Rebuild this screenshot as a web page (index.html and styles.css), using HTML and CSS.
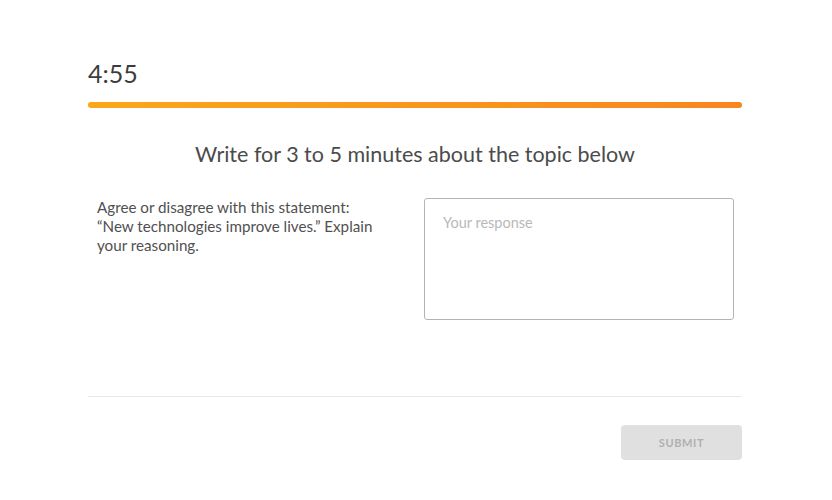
FILE: index.html
```html
<!DOCTYPE html>
<html lang="en">
  <head>
    <meta charset="UTF-8" />
    <meta name="viewport" content="width=device-width, initial-scale=1.0" />
    <title>Writing Prompt</title>
    <link rel="stylesheet" href="styles.css">
  </head>

  <body>
    <div class="page">
      <div class="timer">4:55</div>
      <div class="progress"><div class="progress-fill"></div></div>

      <h1 class="title">Write for 3 to 5 minutes about the topic below</h1>

      <div class="task">
        <p class="prompt">
          Agree or disagree with this statement: “New technologies improve lives.” Explain your reasoning.
        </p>
        <textarea class="response" placeholder="Your response"></textarea>
      </div>

      <div class="footer">
        <button class="submit" disabled>SUBMIT</button>
      </div>
    </div>
  </body>
</html>
```

FILE: styles.css
```css
* {
  margin: 0;
  padding: 0;
  box-sizing: border-box;
}

body {
  font-family: Lato, "Open Sans", sans-serif;
  background-color: #fff;
  color: #4b4b4b;
}

.page {
  width: 654px;
  margin-left: 88px;
  padding-top: 58px;
}

.timer {
  font-size: 25px;
  line-height: 30px;
  color: #3c3c3c;
}

.progress {
  margin-top: 14px;
  height: 6px;
  border-radius: 3px;
  background-color: #eee;
}

.progress-fill {
  height: 100%;
  border-radius: 3px;
  background: linear-gradient(to right, #faa71a, #f8861f);
}

.title {
  margin-top: 33px;
  font-size: 21.5px;
  font-weight: normal;
  text-align: center;
  line-height: 26px;
  color: #4b4b4b;
}

.task {
  display: flex;
  justify-content: space-between;
  margin-top: 31px;
  padding: 0 8px 0 9px;
  height: 198px;
}

.prompt {
  width: 285px;
  font-size: 15.2px;
  line-height: 19px;
  color: #505050;
}

.response {
  width: 310px;
  height: 122px;
  border: 1.5px solid #b4b4b4;
  border-radius: 3px;
  padding: 15px 18px;
  font-family: inherit;
  font-size: 14.5px;
  resize: none;
  outline: none;
}

.response::placeholder {
  color: #b8b8b8;
}

.footer {
  border-top: 1px solid #e8e8e8;
  padding-top: 28px;
  display: flex;
  justify-content: flex-end;
}

.submit {
  width: 121px;
  height: 35px;
  border: none;
  border-radius: 4px;
  background-color: #e0e0e0;
  color: #b0b0b0;
  font-family: inherit;
  font-size: 11px;
  font-weight: bold;
  letter-spacing: 0.6px;
}
```
